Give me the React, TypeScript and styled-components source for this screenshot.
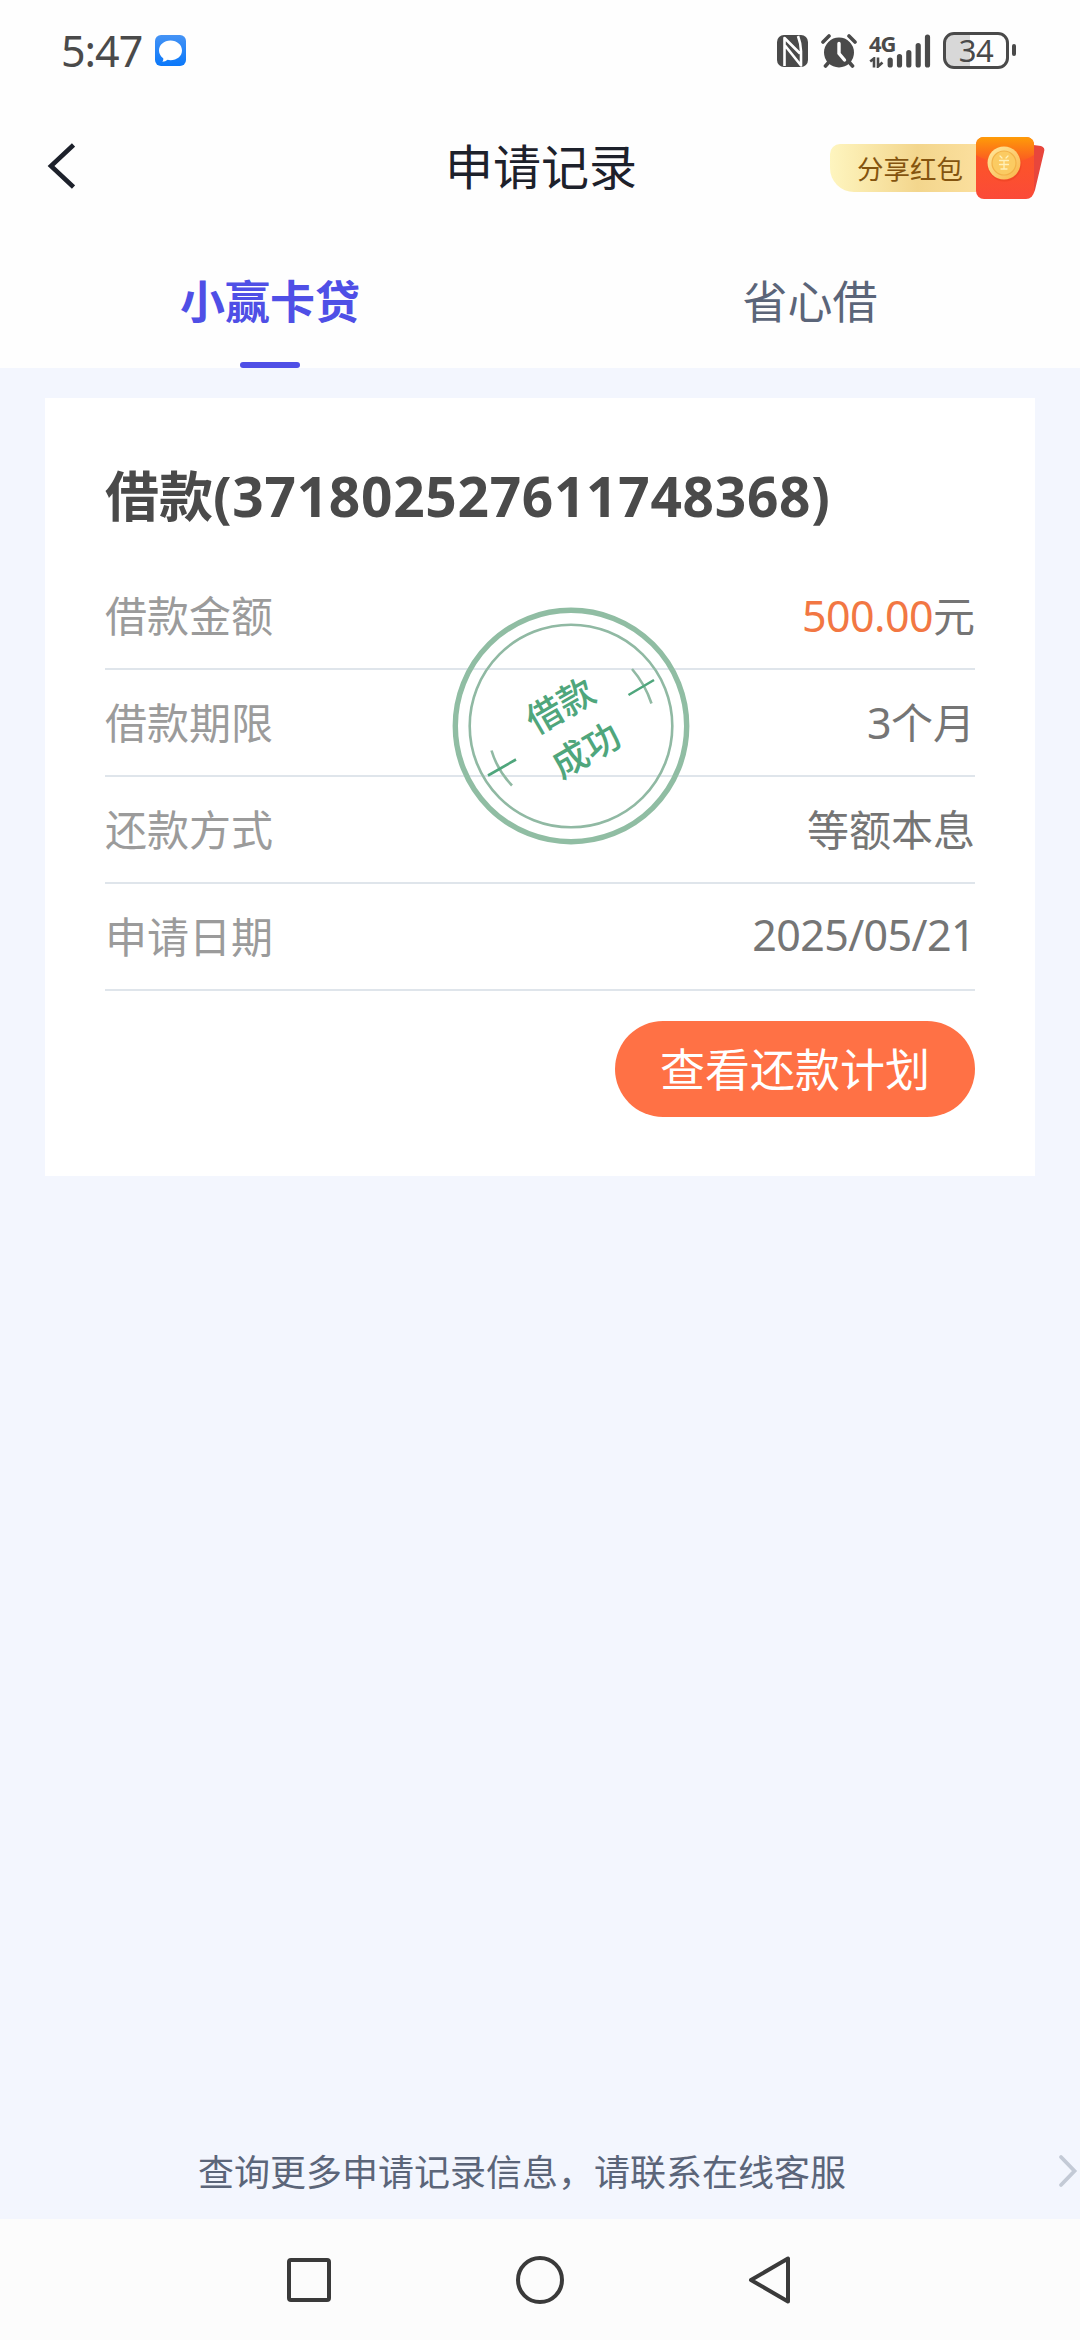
import React, { useState } from 'react';
import styled, { createGlobalStyle, css } from 'styled-components';

interface RecordItem {
  label: string;
  value: string;
  unit?: string;
  highlight?: boolean;
}

const TABS = ['小赢卡贷', '省心借'];

const RECORDS: RecordItem[] = [
  { label: '借款金额', value: '500.00', unit: '元', highlight: true },
  { label: '借款期限', value: '3', unit: '个月' },
  { label: '还款方式', value: '', unit: '等额本息' },
  { label: '申请日期', value: '2025/05/21' },
];

const MessageIcon = () => (
  <svg width="31" height="31" viewBox="0 0 31 31">
    <defs>
      <linearGradient id="message" x1="0" y1="0" x2="0" y2="1">
        <stop offset="0" stopColor="#4593f5" />
        <stop offset="1" stopColor="#0a78fa" />
      </linearGradient>
    </defs>
    <rect width="31" height="31" rx="6" fill="url(#message)" />
    <path
      d="M15.5 5.5C22 5.5 27 9.9 27 15.5S22 25.2 15.5 25.2c-1 0-2-.1-3-.4-1.3 1.2-3.2 2-5.2 2 .9-1 1.2-2.4.9-3.6C5.6 21.4 4 18.6 4 15.5 4 9.9 9 5.5 15.5 5.5z"
      fill="#fff"
    />
  </svg>
);

const NfcIcon = () => (
  <svg width="32" height="32" viewBox="0 0 32 32">
    <rect width="31" height="32" rx="7" fill="#4a4a4a" />
    <path
      d="M7.5 31V3L23 18.5M21 1q3 8 3 15v14.500L8 10.500"
      fill="none"
      stroke="#fff"
      strokeWidth="2.6"
      strokeLinejoin="round"
    />
  </svg>
);

const AlarmIcon = () => (
  <svg width="36" height="34" viewBox="0 0 36 34">
    <circle cx="18" cy="18.5" r="15" fill="#4a4a4a" />
    <path
      d="M2 8l6-6M34 8l-6-6M8 28l-3.5 4M28 28l3.5 4"
      stroke="#4a4a4a"
      strokeWidth="3.6"
      strokeLinecap="round"
    />
    <path
      d="M18 9.5v10l5.5 6.5"
      fill="none"
      stroke="#fff"
      strokeWidth="3.4"
      strokeLinecap="round"
    />
  </svg>
);

const TransferIcon = () => (
  <svg width="15" height="11" viewBox="0 0 15 11">
    <path d="M1.2 4.5L5 1.5v9M9 .5v9l4.5-4" fill="none" stroke="#4a4a4a" strokeWidth="2.6" />
  </svg>
);

const SignalIcon = () => (
  <svg width="44" height="34" viewBox="0 0 44 34">
    <path
      d="M3.2 26v5M12.5 22.5v8.5M21.8 18.5v12.500M31.2 11.5v19.5M40.5 3v28"
      stroke="#4a4a4a"
      strokeWidth="5.2"
      strokeLinecap="round"
    />
  </svg>
);

const BackIcon = () => (
  <svg width="28" height="46" viewBox="0 0 28 46">
    <path d="M26.5 2L4 23l22.5 21" fill="none" stroke="#1d212b" strokeWidth="4.6" />
  </svg>
);

const EnvelopeIcon = () => (
  <svg width="70" height="64" viewBox="0 0 70 64">
    <defs>
      <linearGradient id="envelope" x1="0" y1="0" x2="0" y2="1">
        <stop offset="0" stopColor="#fd5a20" />
        <stop offset="1" stopColor="#fb4a38" />
      </linearGradient>
      <linearGradient id="flap" x1="0" y1="0" x2="0" y2="1">
        <stop offset="0" stopColor="#fe9c08" />
        <stop offset="1" stopColor="#fb5424" />
      </linearGradient>
      <linearGradient id="coin" x1="0" y1="0" x2="1" y2="1">
        <stop offset="0" stopColor="#ffe9a0" />
        <stop offset="1" stopColor="#f9b546" />
      </linearGradient>
    </defs>
    <path d="M50 8l15 2c3 1 4 3 3 6L59 54c-1 4-4 6-8 5z" fill="#e8463c" />
    <rect y="1" width="58" height="62" rx="8" fill="url(#envelope)" />
    <path d="M0 19V9c0-5 3-8 8-8h42c5 0 8 3 8 8v10c-18 11-40 11-58 0z" fill="url(#flap)" />
    <circle cx="28.5" cy="28.5" r="17" fill="#e63f1c" opacity=".45" />
    <circle cx="28" cy="27" r="16.5" fill="url(#coin)" />
    <circle cx="28" cy="27" r="12" fill="#fbcb62" stroke="#f2b248" strokeWidth="1.2" />
    <path
      d="M24 20l2 2M32 20l-2 2M23.5 24.5h9M23.5 28.5h9M25 33h6M28 24.5v8"
      stroke="#fff0b8"
      strokeWidth="1.3"
      strokeLinecap="round"
    />
  </svg>
);

const StampRing = () => (
  <svg width="238" height="238" viewBox="0 0 238 238" fill="none">
    <circle cx="119" cy="119" r="115.7" stroke="#90bda3" strokeWidth="5.4" />
    <circle cx="119" cy="119" r="101.3" stroke="#90b9a3" strokeWidth="2.6" />
    <g strokeWidth="2.6">
      <path d="M180 62q13 15 19.5 34.5M39.5 143.5q6 20 20.5 35" stroke="#90b9a3" />
      <path d="M176.5 88L202 73M36 168.5L64 152.5" stroke="#4fa67c" />
    </g>
  </svg>
);

const ArrowIcon = () => (
  <svg width="20" height="34" viewBox="0 0 20 34">
    <path
      d="M3 3l13.5 14L3 31"
      fill="none"
      stroke="#c3cad6"
      strokeWidth="3.8"
      strokeLinecap="round"
    />
  </svg>
);

const RecentIcon = () => (
  <svg width="48" height="48" viewBox="0 0 48 48">
    <rect x="4" y="4" width="40" height="40" rx="2" fill="none" stroke="#3a3a3a" strokeWidth="4" />
  </svg>
);

const HomeIcon = () => (
  <svg width="48" height="48" viewBox="0 0 48 48">
    <circle cx="24" cy="24" r="22" fill="none" stroke="#3a3a3a" strokeWidth="4" />
  </svg>
);

const ReturnIcon = () => (
  <svg width="48" height="48" viewBox="0 0 48 48">
    <path
      d="M41 2.500v43L4 24z"
      fill="none"
      stroke="#3a3a3a"
      strokeWidth="4"
      strokeLinejoin="round"
    />
  </svg>
);

const App = () => {
  const [activeTab, setActiveTab] = useState<number>(0);

  return (
    <Screen>
      <GlobalStyle />
      <StatusBar>
        <Time>5:47</Time>
        <MessageIcon />
        <StatusIcons>
          <NfcIcon />
          <AlarmIcon />
          <Network>
            <NetworkType>
              <span>4G</span>
              <TransferIcon />
            </NetworkType>
            <SignalIcon />
          </Network>
          <Battery>34</Battery>
        </StatusIcons>
      </StatusBar>

      <Header>
        <BackButton>
          <BackIcon />
        </BackButton>
        <Title>申请记录</Title>
        <ShareButton>
          <ShareLabel>分享红包</ShareLabel>
          <EnvelopeIcon />
        </ShareButton>
      </Header>

      <TabList>
        {TABS.map((tab, index) => (
          <Tab key={tab} $isActive={index === activeTab} onClick={() => setActiveTab(index)}>
            {tab}
          </Tab>
        ))}
      </TabList>

      <Content>
        <Card>
          <CardTitle>
            借款<span>(371802527611748368)</span>
          </CardTitle>
          <RecordList>
            {RECORDS.map(({ label, value, unit, highlight }) => (
              <RecordRow key={label}>
                <dt>{label}</dt>
                <RecordValue>
                  {value && <Figure $highlight={highlight}>{value}</Figure>}
                  {unit}
                </RecordValue>
              </RecordRow>
            ))}
          </RecordList>
          <PlanButton>查看还款计划</PlanButton>
          <Stamp>
            <StampRing />
            <StampText>
              借款
              <br />
              成功
            </StampText>
          </Stamp>
        </Card>
      </Content>

      <ServiceLink>
        <span>查询更多申请记录信息，请联系在线客服</span>
        <ArrowIcon />
      </ServiceLink>

      <NavigationBar>
        <RecentIcon />
        <HomeIcon />
        <ReturnIcon />
      </NavigationBar>
    </Screen>
  );
};

const GlobalStyle = createGlobalStyle`
  * {
    box-sizing: border-box;
  }

  body {
    margin: 0;
    font-family: 'Noto Sans CJK SC', sans-serif;
  }

  h1,
  h2,
  dl,
  dd {
    margin: 0;
  }

  button {
    border: none;
    padding: 0;
    background: none;
    font-family: inherit;
  }

  svg {
    display: block;
    flex-shrink: 0;
  }
`;

const Screen = styled.div`
  display: flex;
  flex-direction: column;
  width: 1080px;
  height: 2340px;
  overflow: hidden;
  background-color: #f3f6fe;
`;

const StatusBar = styled.div`
  display: flex;
  align-items: center;
  height: 101px;
  padding: 0 63px 0 61px;
  background-color: #fefefe;
`;

const Time = styled.span`
  width: 94px;
  color: #4a4a4a;
  font-family: 'Noto Sans', sans-serif;
  font-size: 43px;
  line-height: 60px;
  letter-spacing: -1px;
`;

const StatusIcons = styled.div`
  display: flex;
  align-items: center;
  gap: 12px;
  margin-left: auto;
`;

const Network = styled.div`
  display: flex;
  align-items: center;
`;

const NetworkType = styled.div`
  display: flex;
  flex-direction: column;
  gap: 5px;
  width: 18px;

  span {
    color: #4a4a4a;
    font-family: 'Noto Sans', sans-serif;
    font-size: 22px;
    font-weight: 700;
    line-height: 18px;
    letter-spacing: -1px;
  }
`;

const Battery = styled.div`
  position: relative;
  width: 66px;
  height: 37px;
  margin-right: 8px;
  border: 3px solid #4a4a4a;
  border-radius: 11px;
  background: linear-gradient(to right, #d8d8d8 40%, #fefefe 40%);
  color: #4a4a4a;
  font-family: 'Noto Sans', sans-serif;
  font-size: 31px;
  line-height: 31px;
  letter-spacing: -0.5px;
  text-align: center;

  &:after {
    background-color: #4a4a4a;
    border-radius: 2px;
    content: '';
    height: 12px;
    position: absolute;
    right: -10px;
    top: 9px;
    width: 4px;
  }
`;

const Header = styled.header`
  display: grid;
  grid-template-columns: 1fr auto 1fr;
  align-items: center;
  height: 133px;
  padding: 0 34px 0 36px;
  background-color: #fefefe;
`;

const BackButton = styled.button`
  justify-self: start;
  padding: 0 0 3px 11px;
`;

const Title = styled.h1`
  padding-bottom: 7px;
  color: #1d212b;
  font-size: 48px;
  font-weight: 400;
  line-height: 70px;
`;

const ShareButton = styled.button`
  display: flex;
  align-items: center;
  justify-self: end;
`;

const ShareLabel = styled.span`
  width: 146px;
  height: 48px;
  padding-left: 27px;
  border-radius: 10px 0 0 24px;
  background: linear-gradient(to right, #fef5bf, #f3d68d 60%, #fbdf9d);
  color: #84540f;
  font-size: 26.5px;
  line-height: 48px;
  text-align: left;
  white-space: nowrap;
`;

const TabList = styled.div`
  display: flex;
  height: 134px;
  background-color: #fefefe;
`;

const activeTabCss = css`
  color: #4f4fe6;
  font-weight: 700;

  &:after {
    background-color: #4f4fe6;
    border-radius: 3px;
    bottom: 0;
    content: '';
    height: 6px;
    left: 240px;
    position: absolute;
    width: 60px;
  }
`;

const Tab = styled.button<{ $isActive: boolean }>`
  position: relative;
  flex: 1;
  padding-bottom: 3px;
  color: #5b6579;
  font-size: 45px;
  line-height: 131px;

  ${({ $isActive }) => $isActive && activeTabCss}
`;

const Content = styled.main`
  flex: 1;
  padding: 30px 45px;
`;

const Card = styled.section`
  position: relative;
  display: flex;
  flex-direction: column;
  height: 778px;
  padding: 56px 60px;
  background-color: #fff;
`;

const CardTitle = styled.h2`
  color: #4a4a4a;
  font-size: 54px;
  font-weight: 700;
  line-height: 80px;
  white-space: nowrap;

  span {
    font-family: 'Noto Sans', sans-serif;
    font-size: 55px;
    letter-spacing: 0.7px;
  }
`;

const RecordList = styled.dl`
  padding-top: 27px;
`;

const RecordRow = styled.div`
  display: flex;
  align-items: center;
  justify-content: space-between;
  height: 107px;
  padding-bottom: 4px;
  border-bottom: 2px solid #dfe5eb;
  color: #9b9b9b;
  font-size: 42px;
`;

const RecordValue = styled.dd`
  display: flex;
  align-items: baseline;
  color: #757575;
`;

const Figure = styled.span<{ $highlight?: boolean }>`
  color: ${({ $highlight }) => ($highlight ? '#f27743' : '#757575')};
  font-family: 'Noto Sans', sans-serif;
  font-size: 43px;
  letter-spacing: -0.6px;
`;

const PlanButton = styled.button`
  align-self: flex-end;
  width: 360px;
  height: 96px;
  margin-top: 30px;
  padding-bottom: 4px;
  border-radius: 48px;
  background-color: #ff7145;
  color: #fff;
  font-size: 45px;
`;

const Stamp = styled.div`
  position: absolute;
  left: 407px;
  top: 209px;
`;

const StampText = styled.span`
  position: absolute;
  left: 84px;
  top: 68px;
  color: #4fa67c;
  font-size: 36px;
  font-weight: 500;
  line-height: 51px;
  white-space: nowrap;
  transform: rotate(-30deg);
`;

const ServiceLink = styled.div`
  display: flex;
  align-items: center;
  justify-content: space-between;
  height: 96px;
  padding: 0 2px 0 198px;
  color: #5b6579;
  font-size: 36px;

  span {
    padding-bottom: 2px;
  }
`;

const NavigationBar = styled.nav`
  display: flex;
  justify-content: center;
  gap: 183px;
  height: 121px;
  padding-top: 37px;
  background-color: #fcfcfc;
`;

export default App;
